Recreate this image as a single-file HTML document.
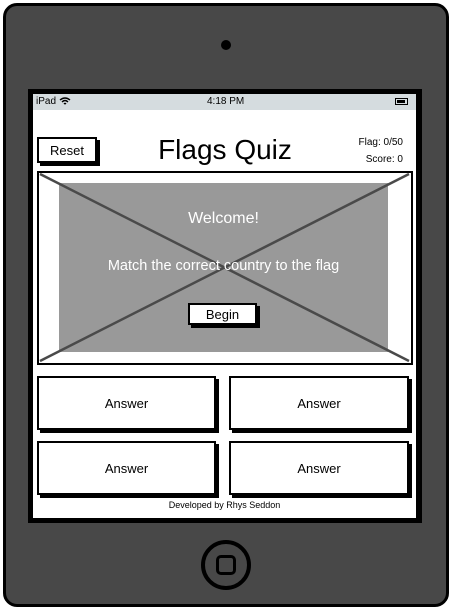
<!DOCTYPE html>
<html><head><meta charset="utf-8"><style>
*{margin:0;padding:0;box-sizing:border-box}
body{width:452px;height:610px;background:#fff;position:relative;overflow:hidden;font-family:"Liberation Sans",sans-serif}
.a{position:absolute}
.dev{left:3px;top:3px;width:446px;height:604px;background:#484848;border:3px solid #000;border-radius:14px}
.scr{left:28px;top:89px;width:394px;height:434px;background:#000}
.in{left:33px;top:94px;width:383px;height:424px;background:#fff}
.sb{left:33px;top:94px;width:383px;height:16px;background:#d5dcdf;font-size:10px}
.btn{background:#fff;border:2px solid #000;box-shadow:3px 3px 0 #000;display:flex;align-items:center;justify-content:center;color:#000}
</style></head><body>
<div class="a dev"></div>
<div class="a" style="left:221px;top:40px;width:10px;height:10px;border-radius:50%;background:#000"></div>
<div class="a scr"></div>
<div class="a in"></div>
<div class="a sb">
 <span class="a" style="left:3px;top:2px">iPad</span>
 <svg class="a" style="left:26px;top:3px" width="12" height="9" viewBox="0 0 12 9"><path d="M1 3Q6 -1 11 3M3 5Q6 2 9 5M5 7Q6 6 7 7" stroke="#000" stroke-width="1.4" fill="none"/></svg>
 <span class="a" style="left:174px;top:2px">4:18 PM</span>
 <div class="a" style="left:362px;top:4px;width:13px;height:7px;border:1px solid #000;padding:1px"><div style="width:8px;height:3px;background:#000"></div></div>
</div>
<div class="a btn" style="left:37px;top:137px;width:60px;height:26px;font-size:13px">Reset</div>
<div class="a" style="left:130px;top:134px;width:190px;text-align:center;font-size:28px">Flags Quiz</div>
<div class="a" style="left:340px;top:137px;width:63px;text-align:right;font-size:10px">Flag: 0/50</div>
<div class="a" style="left:340px;top:154px;width:63px;text-align:right;font-size:10px">Score: 0</div>
<div class="a" style="left:37px;top:171px;width:376px;height:194px;border:2px solid #000;background:#fff"></div>
<div class="a" style="left:59px;top:183px;width:329px;height:169px;background:#999"></div>
<svg class="a" style="left:0;top:0" width="452" height="610"><path d="M40 174L409 361M409 174L40 361" stroke="#4a4a4a" stroke-width="2.5"/></svg>
<div class="a" style="left:59px;top:210px;width:329px;text-align:center;color:#fff;font-size:16px">Welcome!</div>
<div class="a" style="left:59px;top:258px;width:329px;text-align:center;color:#fff;font-size:14.5px">Match the correct country to the flag</div>
<div class="a btn" style="left:188px;top:303px;width:69px;height:22px;font-size:13px">Begin</div>
<div class="a btn" style="left:37px;top:376px;width:179px;height:54px;font-size:13px">Answer</div>
<div class="a btn" style="left:229px;top:376px;width:180px;height:54px;font-size:13px">Answer</div>
<div class="a btn" style="left:37px;top:441px;width:179px;height:54px;font-size:13px">Answer</div>
<div class="a btn" style="left:229px;top:441px;width:180px;height:54px;font-size:13px">Answer</div>
<div class="a" style="left:33px;top:500px;width:383px;text-align:center;font-size:9px">Developed by Rhys Seddon</div>
<div class="a" style="left:201px;top:540px;width:50px;height:50px;border-radius:50%;border:4px solid #000"></div>
<div class="a" style="left:216px;top:555px;width:20px;height:20px;border-radius:5px;border:3px solid #000"></div>
</body></html>
